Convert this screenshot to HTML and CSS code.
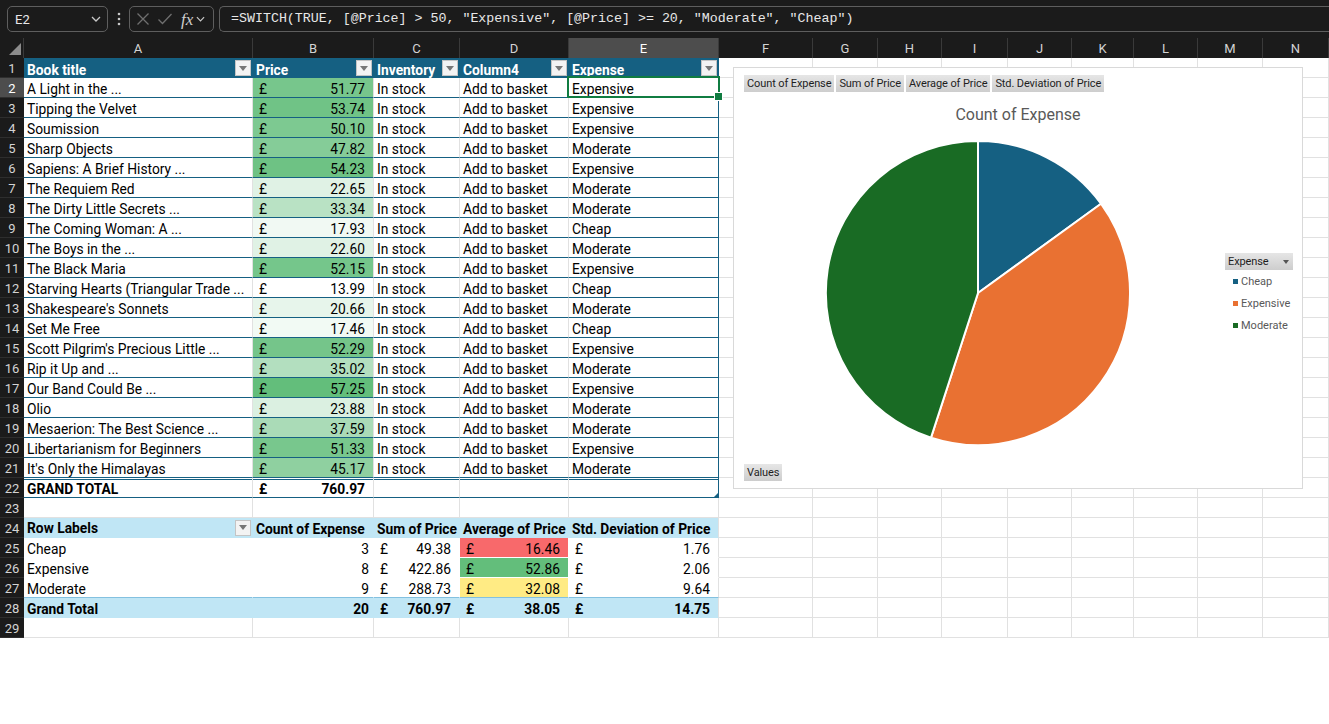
FILE: index.html
```html
<!DOCTYPE html>
<html lang="en">
<head>
<meta charset="utf-8">
<title>Book prices</title>
<link rel="stylesheet" href="styles.css">
</head>
<body>
<div class="topbar">
  <div class="namebox"><span>E2</span><svg width="10" height="6" viewBox="0 0 10 6"><path d="M1 1 L5 5 L9 1" fill="none" stroke="#c8c8c8" stroke-width="1.3"/></svg></div>
  <div class="dots"><svg width="4" height="14" viewBox="0 0 4 14"><circle cx="2" cy="2" r="1.3" fill="#c8c8c8"/><circle cx="2" cy="7" r="1.3" fill="#c8c8c8"/><circle cx="2" cy="12" r="1.3" fill="#c8c8c8"/></svg></div>
  <div class="fxbox">
    <svg width="14" height="14" viewBox="0 0 14 14"><path d="M1.5 1.5 L12.5 12.5 M12.5 1.5 L1.5 12.5" stroke="#6f6f6f" stroke-width="1.3"/></svg>
    <svg width="16" height="14" viewBox="0 0 16 14"><path d="M1.5 7.5 L5.5 11.5 L14.5 2" fill="none" stroke="#6f6f6f" stroke-width="1.3"/></svg>
    <span class="fx">fx</span>
    <svg width="9" height="6" viewBox="0 0 10 6"><path d="M1 1 L5 5 L9 1" fill="none" stroke="#c8c8c8" stroke-width="1.3"/></svg>
  </div>
  <div class="formula">=SWITCH(TRUE, [@Price] &gt; 50, "Expensive", [@Price] &gt;= 20, "Moderate", "Cheap")</div>
</div>

<div class="sheet">
  <div class="corner"><svg width="14" height="14" viewBox="0 0 14 14"><path d="M13 1 L13 13 L1 13 Z" fill="#8c8c8c"/></svg></div>
  <div class="ch">A</div><div class="ch">B</div><div class="ch">C</div><div class="ch">D</div><div class="ch sel">E</div>
  <div class="ch">F</div><div class="ch">G</div><div class="ch">H</div><div class="ch">I</div><div class="ch">J</div><div class="ch">K</div><div class="ch">L</div><div class="ch">M</div><div class="ch">N</div>

  <div class="canvas">
    <div class="chart">
      <div class="tabs">
        <span class="btn">Count of Expense</span><span class="btn">Sum of Price</span><span class="btn">Average of Price</span><span class="btn">Std. Deviation of Price</span>
      </div>
      <div class="title">Count of Expense</div>
      <div class="plot">
        <svg class="pie" width="308" height="308" viewBox="0 0 308 308">
          <path d="M154 154 L154 2 A152 152 0 0 1 277 64.7 Z" fill="#156082" stroke="#fff" stroke-width="2" stroke-linejoin="round"/>
          <path d="M154 154 L277 64.7 A152 152 0 0 1 107 298.6 Z" fill="#e97132" stroke="#fff" stroke-width="2" stroke-linejoin="round"/>
          <path d="M154 154 L107 298.6 A152 152 0 0 1 154 2 Z" fill="#196b24" stroke="#fff" stroke-width="2" stroke-linejoin="round"/>
        </svg>
        <div class="legend">
          <div class="btn lbtn"><span>Expense</span><i class="tri"></i></div>
          <div class="li"><i class="sw sw-b"></i>Cheap</div>
          <div class="li"><i class="sw sw-o"></i>Expensive</div>
          <div class="li"><i class="sw sw-g"></i>Moderate</div>
        </div>
      </div>
      <div class="vals"><span class="btn">Values</span></div>
    </div>
  </div>

  <div class="rh">1</div>
  <div class="th"><span>Book title</span><i class="fb"></i></div>
  <div class="th"><span>Price</span><i class="fb"></i></div>
  <div class="th"><span>Inventory</span><i class="fb"></i></div>
  <div class="th"><span>Column4</span><i class="fb"></i></div>
  <div class="th"><span>Expense</span><i class="fb"></i></div>

  <div class="rh rsel">2</div>
  <div class="c t">A Light in the ...</div><div class="c t p" style="background:rgb(119,198,140)"><span>£</span><span>51.77</span></div><div class="c t">In stock</div><div class="c t">Add to basket</div><div class="c t te cur">Expensive<i class="selbox"></i></div>
  <div class="rh">3</div>
  <div class="c t">Tipping the Velvet</div><div class="c t p" style="background:rgb(112,195,134)"><span>£</span><span>53.74</span></div><div class="c t">In stock</div><div class="c t">Add to basket</div><div class="c t te">Expensive</div>
  <div class="rh">4</div>
  <div class="c t">Soumission</div><div class="c t p" style="background:rgb(125,201,145)"><span>£</span><span>50.10</span></div><div class="c t">In stock</div><div class="c t">Add to basket</div><div class="c t te">Expensive</div>
  <div class="rh">5</div>
  <div class="c t">Sharp Objects</div><div class="c t p" style="background:rgb(133,204,152)"><span>£</span><span>47.82</span></div><div class="c t">In stock</div><div class="c t">Add to basket</div><div class="c t te">Moderate</div>
  <div class="rh">6</div>
  <div class="c t">Sapiens: A Brief History ...</div><div class="c t p" style="background:rgb(110,194,132)"><span>£</span><span>54.23</span></div><div class="c t">In stock</div><div class="c t">Add to basket</div><div class="c t te">Expensive</div>
  <div class="rh">7</div>
  <div class="c t">The Requiem Red</div><div class="c t p" style="background:rgb(224,242,229)"><span>£</span><span>22.65</span></div><div class="c t">In stock</div><div class="c t">Add to basket</div><div class="c t te">Moderate</div>
  <div class="rh">8</div>
  <div class="c t">The Dirty Little Secrets ...</div><div class="c t p" style="background:rgb(185,226,196)"><span>£</span><span>33.34</span></div><div class="c t">In stock</div><div class="c t">Add to basket</div><div class="c t te">Moderate</div>
  <div class="rh">9</div>
  <div class="c t">The Coming Woman: A ...</div><div class="c t p" style="background:rgb(241,249,243)"><span>£</span><span>17.93</span></div><div class="c t">In stock</div><div class="c t">Add to basket</div><div class="c t te">Cheap</div>
  <div class="rh">10</div>
  <div class="c t">The Boys in the ...</div><div class="c t p" style="background:rgb(224,242,229)"><span>£</span><span>22.60</span></div><div class="c t">In stock</div><div class="c t">Add to basket</div><div class="c t te">Moderate</div>
  <div class="rh">11</div>
  <div class="c t">The Black Maria</div><div class="c t p" style="background:rgb(117,198,139)"><span>£</span><span>52.15</span></div><div class="c t">In stock</div><div class="c t">Add to basket</div><div class="c t te">Expensive</div>
  <div class="rh">12</div>
  <div class="c t">Starving Hearts (Triangular Trade ...</div><div class="c t p"><span>£</span><span>13.99</span></div><div class="c t">In stock</div><div class="c t">Add to basket</div><div class="c t te">Cheap</div>
  <div class="rh">13</div>
  <div class="c t">Shakespeare's Sonnets</div><div class="c t p" style="background:rgb(231,245,235)"><span>£</span><span>20.66</span></div><div class="c t">In stock</div><div class="c t">Add to basket</div><div class="c t te">Moderate</div>
  <div class="rh">14</div>
  <div class="c t">Set Me Free</div><div class="c t p" style="background:rgb(242,250,244)"><span>£</span><span>17.46</span></div><div class="c t">In stock</div><div class="c t">Add to basket</div><div class="c t te">Cheap</div>
  <div class="rh">15</div>
  <div class="c t">Scott Pilgrim's Precious Little ...</div><div class="c t p" style="background:rgb(117,197,138)"><span>£</span><span>52.29</span></div><div class="c t">In stock</div><div class="c t">Add to basket</div><div class="c t te">Expensive</div>
  <div class="rh">16</div>
  <div class="c t">Rip it Up and ...</div><div class="c t p" style="background:rgb(179,223,191)"><span>£</span><span>35.02</span></div><div class="c t">In stock</div><div class="c t">Add to basket</div><div class="c t te">Moderate</div>
  <div class="rh">17</div>
  <div class="c t">Our Band Could Be ...</div><div class="c t p" style="background:rgb(99,190,123)"><span>£</span><span>57.25</span></div><div class="c t">In stock</div><div class="c t">Add to basket</div><div class="c t te">Expensive</div>
  <div class="rh">18</div>
  <div class="c t">Olio</div><div class="c t p" style="background:rgb(219,240,225)"><span>£</span><span>23.88</span></div><div class="c t">In stock</div><div class="c t">Add to basket</div><div class="c t te">Moderate</div>
  <div class="rh">19</div>
  <div class="c t">Mesaerion: The Best Science ...</div><div class="c t p" style="background:rgb(170,219,183)"><span>£</span><span>37.59</span></div><div class="c t">In stock</div><div class="c t">Add to basket</div><div class="c t te">Moderate</div>
  <div class="rh">20</div>
  <div class="c t">Libertarianism for Beginners</div><div class="c t p" style="background:rgb(120,199,141)"><span>£</span><span>51.33</span></div><div class="c t">In stock</div><div class="c t">Add to basket</div><div class="c t te">Expensive</div>
  <div class="rh">21</div>
  <div class="c t">It's Only the Himalayas</div><div class="c t p" style="background:rgb(143,208,160)"><span>£</span><span>45.17</span></div><div class="c t">In stock</div><div class="c t">Add to basket</div><div class="c t te">Moderate</div>
  <div class="rh">22</div>
  <div class="c tt">GRAND TOTAL</div><div class="c tt p"><span>£</span><span>760.97</span></div><div class="c tt"></div><div class="c tt"></div><div class="c tt te"><i class="resize"></i></div>

  <div class="rh">23</div>
  <div class="c"></div><div class="c"></div><div class="c"></div><div class="c"></div><div class="c"></div>

  <div class="rh">24</div>
  <div class="c ph phf"><span>Row Labels</span><i class="fb"></i></div><div class="c ph">Count of Expense</div><div class="c ph">Sum of Price</div><div class="c ph">Average of Price</div><div class="c ph pe">Std. Deviation of Price</div>
  <div class="rh">25</div>
  <div class="c pb">Cheap</div><div class="c pb num">3</div><div class="c pb p"><span>£</span><span>49.38</span></div><div class="c pb p" style="background:#f8696b"><span>£</span><span>16.46</span></div><div class="c pb p pe"><span>£</span><span>1.76</span></div>
  <div class="rh">26</div>
  <div class="c pb">Expensive</div><div class="c pb num">8</div><div class="c pb p"><span>£</span><span>422.86</span></div><div class="c pb p" style="background:#63be7b"><span>£</span><span>52.86</span></div><div class="c pb p pe"><span>£</span><span>2.06</span></div>
  <div class="rh">27</div>
  <div class="c pb pl">Moderate</div><div class="c pb pl num">9</div><div class="c pb pl p"><span>£</span><span>288.73</span></div><div class="c pb pl p" style="background:#ffeb84"><span>£</span><span>32.08</span></div><div class="c pb pl p pe"><span>£</span><span>9.64</span></div>
  <div class="rh">28</div>
  <div class="c pg">Grand Total</div><div class="c pg num">20</div><div class="c pg p"><span>£</span><span>760.97</span></div><div class="c pg p"><span>£</span><span>38.05</span></div><div class="c pg p pe"><span>£</span><span>14.75</span></div>

  <div class="rh">29</div>
  <div class="c"></div><div class="c"></div><div class="c"></div><div class="c"></div><div class="c"></div>
</div>
</body>
</html>
```

FILE: styles.css
```css
* { box-sizing: border-box; }

body {
  margin: 0;
  background: #fff;
  font-family: Roboto, "Liberation Sans", sans-serif;
}

/* ---------- formula bar ---------- */
.topbar {
  height: 38px;
  background: #1b1b1b;
  display: flex;
  align-items: flex-start;
  padding: 6px 0 0 7px;
  overflow: hidden;
}
.namebox {
  flex: none;
  width: 101px;
  height: 26px;
  border: 1px solid #5e5e5e;
  border-radius: 5px;
  display: flex;
  align-items: center;
  justify-content: space-between;
  padding: 0 6px 0 7px;
  color: #e8e8e8;
  font-size: 13px;
}
.dots {
  flex: none;
  width: 21px;
  height: 26px;
  display: flex;
  align-items: center;
  justify-content: center;
}
.fxbox {
  flex: none;
  width: 85px;
  height: 26px;
  border: 1px solid #5e5e5e;
  border-radius: 5px;
  display: flex;
  align-items: center;
  gap: 7px;
  padding: 0 3px 0 6px;
}
.fx {
  font-family: "Liberation Serif", "DejaVu Serif", serif;
  font-style: italic;
  font-size: 17px;
  color: #cfcfcf;
  line-height: 1;
  margin-left: 1px;
  margin-right: -4px;
}
.formula {
  flex: none;
  width: 1200px;
  height: 26px;
  margin-left: 5px;
  border: 1px solid #5e5e5e;
  border-right: none;
  border-radius: 5px 0 0 5px;
  color: #e8e8e8;
  font-family: "Liberation Mono", "DejaVu Sans Mono", monospace;
  font-size: 13.3px;
  line-height: 24px;
  padding-left: 11px;
  white-space: pre;
}

/* ---------- sheet grid ---------- */
.sheet {
  display: grid;
  grid-template-columns: 24px 229px 121px 86px 109px 150px 94px 65px 64px 66px 64px 62px 64px 65px 66px;
  grid-auto-rows: 20px;
}
.corner {
  background: #1b1b1b;
  border-right: 1px solid #3a3a3a;
  display: flex;
  align-items: flex-end;
  justify-content: flex-end;
  padding: 0 1px 2px 0;
}
.ch {
  background: #1b1b1b;
  color: #d4d4d4;
  font-size: 13px;
  text-align: center;
  line-height: 21px;
  border-right: 1px solid #3a3a3a;
}
.ch.sel { background: #4d4d4d; color: #fff; }
.rh {
  background: #1b1b1b;
  color: #d4d4d4;
  font-size: 13px;
  text-align: center;
  line-height: 22px;
  border-bottom: 1px solid #2e2e2e;
}
.rh.rsel { background: #4d4d4d; color: #fff; }

.c {
  position: relative;
  border-right: 1px solid #e1e1e1;
  border-bottom: 1px solid #e1e1e1;
  font-size: 13.8px;
  line-height: 22px;
  padding: 0 3px;
  white-space: nowrap;
  color: #000;
}
.p {
  display: flex;
  justify-content: space-between;
  padding: 0 8px 0 6px;
}
.num { text-align: right; padding-right: 4px; }

/* table */
.th {
  background: #156082;
  color: #fff;
  font-weight: bold;
  font-size: 13.8px;
  display: flex;
  align-items: center;
  justify-content: space-between;
  padding: 0 2px 0 3px;
  white-space: nowrap;
}
.th span { padding-top: 3px; }
.fb {
  flex: none;
  width: 16px;
  height: 16px;
  background: #f3f3f3;
  border: 1px solid #c4c4c4;
  display: flex;
  align-items: center;
  justify-content: center;
}
.fb::after {
  content: "";
  border-top: 5px solid #777;
  border-left: 4px solid transparent;
  border-right: 4px solid transparent;
}
.t { border-bottom-color: #156082; }
.te { border-right-color: #156082; }
.tt {
  font-weight: bold;
  border-bottom-color: #156082;
  box-shadow: inset 0 1px #fff, inset 0 2px #156082;
  line-height: 23px;
}
.cur { z-index: 2; }
.selbox {
  position: absolute;
  left: -2px;
  top: -2px;
  right: -2px;
  bottom: -1px;
  border: 2px solid #107c41;
}
.selbox::after {
  content: "";
  position: absolute;
  right: -5px;
  bottom: -5px;
  width: 7px;
  height: 7px;
  background: #107c41;
  border: 1px solid #fff;
}
.resize {
  position: absolute;
  right: 0;
  bottom: 0;
  border-bottom: 4px solid #156082;
  border-left: 4px solid transparent;
}

/* pivot */
.ph {
  background: #c0e6f5;
  font-weight: bold;
  border-right-color: #c0e6f5;
  border-bottom-color: #c0e6f5;
}
.phf {
  display: flex;
  align-items: center;
  justify-content: space-between;
  padding-right: 1px;
}
.pb { border-right-color: #fff; border-bottom-color: #fff; }
.pl { border-bottom-color: #83c1e0; }
.pg {
  background: #c0e6f5;
  font-weight: bold;
  border-right-color: #c0e6f5;
  border-bottom-color: #c0e6f5;
}
.pe { border-right-color: #e1e1e1; }

/* ---------- empty area with the chart ---------- */
.canvas {
  grid-column: 7 / -1;
  grid-row: 2 / span 29;
  position: relative;
  background:
    linear-gradient(#e1e1e1, #e1e1e1) 93px 0 / 1px 100% no-repeat,
    linear-gradient(#e1e1e1, #e1e1e1) 158px 0 / 1px 100% no-repeat,
    linear-gradient(#e1e1e1, #e1e1e1) 222px 0 / 1px 100% no-repeat,
    linear-gradient(#e1e1e1, #e1e1e1) 288px 0 / 1px 100% no-repeat,
    linear-gradient(#e1e1e1, #e1e1e1) 352px 0 / 1px 100% no-repeat,
    linear-gradient(#e1e1e1, #e1e1e1) 414px 0 / 1px 100% no-repeat,
    linear-gradient(#e1e1e1, #e1e1e1) 478px 0 / 1px 100% no-repeat,
    linear-gradient(#e1e1e1, #e1e1e1) 543px 0 / 1px 100% no-repeat,
    linear-gradient(#e1e1e1, #e1e1e1) 609px 0 / 1px 100% no-repeat,
    repeating-linear-gradient(to bottom, transparent 0 19px, #e1e1e1 19px 20px);
}
.chart {
  position: absolute;
  left: 14px;
  top: 9px;
  width: 570px;
  height: 422px;
  background: #fff;
  border: 1px solid #d9d9d9;
  display: flex;
  flex-direction: column;
  padding: 7px 10px 0;
}
.tabs { display: flex; gap: 2px; height: 17px; }
.btn {
  display: inline-flex;
  align-items: center;
  height: 17px;
  padding: 0 3px;
  background: linear-gradient(#e6e6e6, #cdcdcd);
  color: #1e1e1e;
  font-size: 11px;
  letter-spacing: -0.1px;
  white-space: nowrap;
}
.title {
  margin-top: 13px;
  text-align: center;
  font-size: 16px;
  line-height: 20px;
  color: #595959;
}
.plot { display: flex; margin-top: 14px; }
.pie { flex: none; margin-left: 80px; display: block; }
.legend { margin: 111px 0 0 93px; }
.lbtn {
  width: 68px;
  justify-content: space-between;
  padding: 0 4px 0 3px;
}
.tri {
  border-top: 4px solid #555;
  border-left: 3.5px solid transparent;
  border-right: 3.5px solid transparent;
}
.li {
  display: flex;
  align-items: center;
  font-size: 11px;
  color: #595959;
  height: 22px;
  padding-left: 8px;
}
.sw { width: 5px; height: 5px; margin-right: 3px; }
.sw-b { background: #156082; }
.sw-o { background: #e97132; }
.sw-g { background: #196b24; }
.vals { margin-top: 14px; }
```
